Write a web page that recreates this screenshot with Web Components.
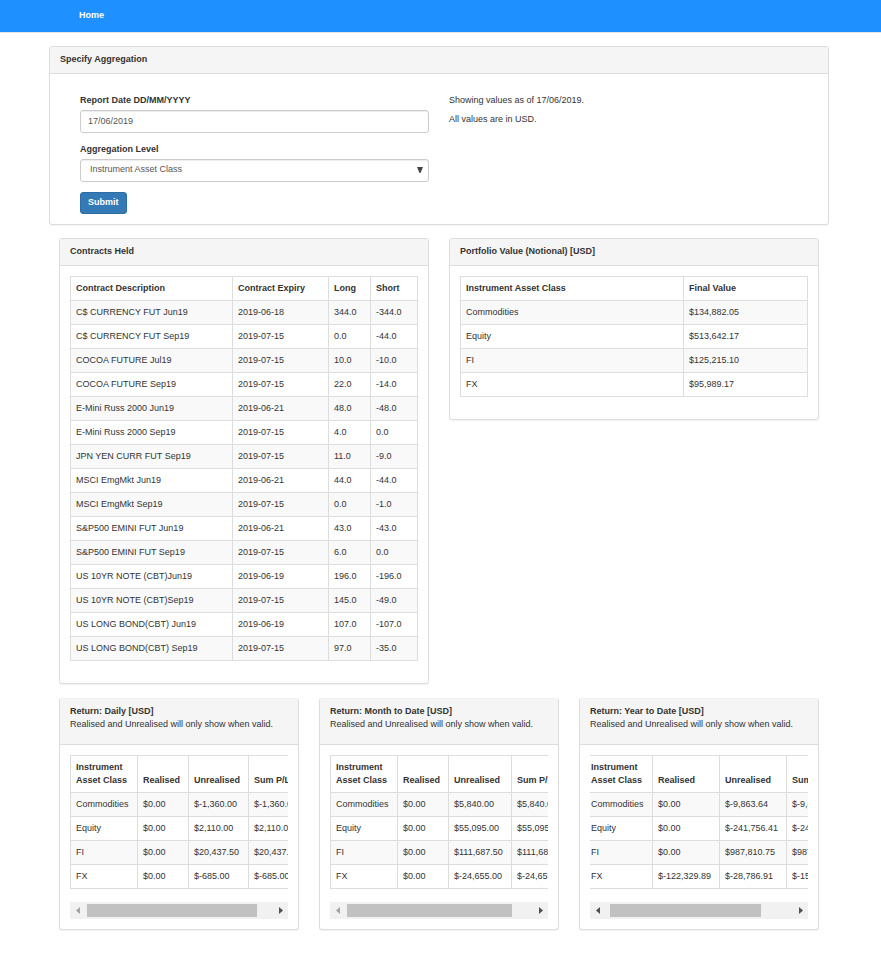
<!DOCTYPE html>
<html lang="en">
<head>
<meta charset="utf-8">
<meta name="viewport" content="width=device-width, initial-scale=1">
<title>Home</title>
<style>
  body { margin: 0; background: #fff; color: #333; font: 9px/13px "Liberation Sans", Arial, sans-serif; }
</style>
</head>
<body>
<report-page></report-page>

<script>
const base = `*, *::before, *::after { box-sizing: border-box; }`;

function define(name, markup, setup) {
  const template = document.createElement('template');
  template.innerHTML = markup;
  customElements.define(name, class extends HTMLElement {
    connectedCallback() {
      if (this.shadowRoot) return;
      this.attachShadow({ mode: 'open' }).append(template.content.cloneNode(true));
      if (setup) setup(this, this.shadowRoot);
    }
  });
}

const datasets = {
  contracts: {
    widths: [0, 96, 42, 47],
    head: ['Contract Description', 'Contract Expiry', 'Long', 'Short'],
    rows: [
      ['C$ CURRENCY FUT Jun19', '2019-06-18', '344.0', '-344.0'],
      ['C$ CURRENCY FUT Sep19', '2019-07-15', '0.0', '-44.0'],
      ['COCOA FUTURE Jul19', '2019-07-15', '10.0', '-10.0'],
      ['COCOA FUTURE Sep19', '2019-07-15', '22.0', '-14.0'],
      ['E-Mini Russ 2000 Jun19', '2019-06-21', '48.0', '-48.0'],
      ['E-Mini Russ 2000 Sep19', '2019-07-15', '4.0', '0.0'],
      ['JPN YEN CURR FUT Sep19', '2019-07-15', '11.0', '-9.0'],
      ['MSCI EmgMkt Jun19', '2019-06-21', '44.0', '-44.0'],
      ['MSCI EmgMkt Sep19', '2019-07-15', '0.0', '-1.0'],
      ['S&P500 EMINI FUT Jun19', '2019-06-21', '43.0', '-43.0'],
      ['S&P500 EMINI FUT Sep19', '2019-07-15', '6.0', '0.0'],
      ['US 10YR NOTE (CBT)Jun19', '2019-06-19', '196.0', '-196.0'],
      ['US 10YR NOTE (CBT)Sep19', '2019-07-15', '145.0', '-49.0'],
      ['US LONG BOND(CBT) Jun19', '2019-06-19', '107.0', '-107.0'],
      ['US LONG BOND(CBT) Sep19', '2019-07-15', '97.0', '-35.0']
    ]
  },
  portfolio: {
    widths: [0, 124],
    head: ['Instrument Asset Class', 'Final Value'],
    rows: [['Commodities', '$134,882.05'], ['Equity', '$513,642.17'], ['FI', '$125,215.10'], ['FX', '$95,989.17']]
  },
  daily: {
    widths: [67, 51, 60, 58],
    head: ['Instrument Asset Class', 'Realised', 'Unrealised', 'Sum P/L'],
    rows: [
      ['Commodities', '$0.00', '$-1,360.00', '$-1,360.00'],
      ['Equity', '$0.00', '$2,110.00', '$2,110.00'],
      ['FI', '$0.00', '$20,437.50', '$20,437.50'],
      ['FX', '$0.00', '$-685.00', '$-685.00']
    ]
  },
  month: {
    widths: [67, 51, 63, 62],
    head: ['Instrument Asset Class', 'Realised', 'Unrealised', 'Sum P/L'],
    rows: [
      ['Commodities', '$0.00', '$5,840.00', '$5,840.00'],
      ['Equity', '$0.00', '$55,095.00', '$55,095.00'],
      ['FI', '$0.00', '$111,687.50', '$111,687.50'],
      ['FX', '$0.00', '$-24,655.00', '$-24,655.00']
    ]
  },
  year: {
    widths: [67, 67, 67, 65],
    head: ['Instrument Asset Class', 'Realised', 'Unrealised', 'Sum P/L'],
    rows: [
      ['Commodities', '$0.00', '$-9,863.64', '$-9,863.64'],
      ['Equity', '$0.00', '$-241,756.41', '$-241,756.41'],
      ['FI', '$0.00', '$987,810.75', '$987,810.75'],
      ['FX', '$-122,329.89', '$-28,786.91', '$-151,116.80']
    ]
  }
};

define('nav-bar', `
  <style>${base}
    :host { display: block; background: #1e90ff; border-bottom: 1px solid #e7e7e7; }
    nav { padding: 9px 79px 10px; }
    a { color: #fff; font-weight: bold; text-decoration: none; }
  </style>
  <nav><a href="#">Home</a></nav>`);

define('info-panel', `
  <style>${base}
    :host { display: block; background: #fff; border: 1px solid #ddd; border-radius: 3px; box-shadow: 0 1px 1px rgba(0,0,0,.05); min-width: 0; }
    header { padding: 6px 10px 7px; background: #f5f5f5; border-bottom: 1px solid #ddd; border-radius: 2px 2px 0 0; }
    :host([noted]) { border-top-color: #f0f0f0; }
    :host([noted]) header { padding-bottom: 13px; }
    h2 { margin: 0; font: inherit; font-weight: bold; }
    .body { padding: 10px; }
  </style>
  <header><h2><slot name="title"></slot></h2><slot name="note"></slot></header>
  <div class="body"><slot></slot></div>`);

define('aggregation-form', `
  <style>${base}
    :host { display: grid; grid-template-columns: 1fr 1fr; gap: 20px; padding: 10px 20px 0; }
    form { display: grid; gap: 10px; justify-items: start; }
    .field { display: grid; gap: 3px; width: 100%; }
    label { font-weight: bold; }
    input, select { width: 100%; height: 23px; margin: 0; border: 1px solid #ccc; border-radius: 3px; background: #fff;
      color: #555; font: inherit; box-shadow: inset 0 1px 1px rgba(0,0,0,.075); }
    input { padding: 0 7px 2px; }
    .pick { display: grid; align-items: center; }
    .pick > * { grid-area: 1 / 1; }
    select { appearance: none; padding: 0 20px 2px 9px; }
    svg { justify-self: end; margin: 0 6px 2px 0; pointer-events: none; }
    button { height: 22px; padding: 0 7px 2px; border: 1px solid #2e6da4; border-radius: 3px; background: #337ab7;
      color: #fff; font: inherit; font-weight: bold; }
    p { margin: 0 0 6px; }
  </style>
  <form onsubmit="return false">
    <div class="field">
      <label for="date">Report Date DD/MM/YYYY</label>
      <input id="date" type="text" value="17/06/2019">
    </div>
    <div class="field">
      <label for="level">Aggregation Level</label>
      <div class="pick">
        <select id="level"><option>Instrument Asset Class</option></select>
        <svg width="6" height="6" viewBox="0 0 6 6" aria-hidden="true"><path d="M0 0h6L3.500 6h-1z" fill="#444"/></svg>
      </div>
    </div>
    <button type="submit">Submit</button>
  </form>
  <div>
    <p>Showing values as of 17/06/2019.</p>
    <p>All values are in USD.</p>
  </div>`);

define('data-table', `
  <style>${base}
    :host { display: block; }
    table { width: 100%; table-layout: fixed; border-collapse: collapse; }
    th, td { padding: 5px; border: 1px solid #ddd; text-align: left; vertical-align: top; white-space: nowrap; }
    th { vertical-align: bottom; }
    tbody tr:nth-child(odd) { background: #f9f9f9; }
    :host([wide]) th:first-child { white-space: normal; }
  </style>
  <table><colgroup></colgroup><thead><tr></tr></thead><tbody></tbody></table>`,
  (host, root) => {
    const { widths, head, rows } = datasets[host.getAttribute('source')];
    const add = (parent, tag, text = '') => {
      const el = parent.appendChild(document.createElement(tag));
      el.textContent = text;
      return el;
    };
    for (const w of widths) {
      const col = add(root.querySelector('colgroup'), 'col');
      if (w) col.style.width = w + 'px';
    }
    if (host.hasAttribute('wide')) {
      root.querySelector('table').style.minWidth = widths.reduce((a, b) => a + b, 0) + 'px';
    }
    for (const text of head) add(root.querySelector('thead tr'), 'th', text).scope = 'col';
    for (const row of rows) {
      const tr = add(root.querySelector('tbody'), 'tr');
      for (const text of row) add(tr, 'td', text);
    }
  });

define('scroll-area', `
  <style>${base}
    :host { display: block; }
    .view { overflow-x: auto; overflow-y: hidden; scrollbar-width: none; }
    .bar { display: grid; grid-template-columns: 17px 1fr 17px; height: 17px; margin-top: 13px; background: #f1f1f1; }
    button { display: grid; place-items: center; padding: 0 2px 0 0; border: 0; background: none; color: #505050; }
    button:last-child { padding: 0 0 0 2px; }
    button:disabled { color: #a3a3a3; }
    .track { padding: 2px 0; overflow: hidden; }
    .thumb { height: 13px; background: #c1c1c1; }
  </style>
  <div class="view"><slot></slot></div>
  <div class="bar">
    <button type="button" aria-label="Scroll left"><svg width="4" height="7" viewBox="0 0 4 7"><path d="M4 0v7L0 3.500z" fill="currentColor"/></svg></button>
    <div class="track"><div class="thumb"></div></div>
    <button type="button" aria-label="Scroll right"><svg width="4" height="7" viewBox="0 0 4 7"><path d="M0 0v7l4-3.500z" fill="currentColor"/></svg></button>
  </div>`,
  (host, root) => {
    const view = root.querySelector('.view');
    const track = root.querySelector('.track');
    const thumb = root.querySelector('.thumb');
    const [left, right] = root.querySelectorAll('button');
    const update = () => {
      const scale = track.clientWidth / view.scrollWidth;
      thumb.style.width = Math.ceil(view.clientWidth * scale) + 'px';
      thumb.style.marginLeft = Math.round(view.scrollLeft * scale) + 'px';
      left.disabled = view.scrollLeft <= 0;
      right.disabled = view.scrollLeft + view.clientWidth >= view.scrollWidth;
    };
    left.onclick = () => { view.scrollLeft -= 40; };
    right.onclick = () => { view.scrollLeft += 40; };
    view.addEventListener('scroll', update);
    new ResizeObserver(update).observe(view);
    requestAnimationFrame(() => {
      view.scrollLeft = Number(host.getAttribute('start') || 0);
      update();
    });
  });

define('report-page', `
  <style>${base}
    :host { display: block; }
    main { display: grid; gap: 13px; padding: 13px 52px 28px 49px; }
    .row { display: grid; gap: 20px; padding: 0 10px; align-items: start; }
    .two { grid-template-columns: repeat(2, minmax(0, 1fr)); }
    .three { grid-template-columns: repeat(3, minmax(0, 1fr)); padding-top: 1px; }
    .two data-table { padding-bottom: 12px; }
  </style>
  <nav-bar></nav-bar>
  <main>
    <info-panel><span slot="title">Specify Aggregation</span><aggregation-form></aggregation-form></info-panel>
    <div class="row two">
      <info-panel><span slot="title">Contracts Held</span><data-table source="contracts"></data-table></info-panel>
      <info-panel><span slot="title">Portfolio Value (Notional) [USD]</span><data-table source="portfolio"></data-table></info-panel>
    </div>
    <div class="row three">
      <info-panel noted><span slot="title">Return: Daily [USD]</span><span slot="note">Realised and Unrealised will only show when valid.</span>
        <scroll-area><data-table wide source="daily"></data-table></scroll-area></info-panel>
      <info-panel noted><span slot="title">Return: Month to Date [USD]</span><span slot="note">Realised and Unrealised will only show when valid.</span>
        <scroll-area><data-table wide source="month"></data-table></scroll-area></info-panel>
      <info-panel noted><span slot="title">Return: Year to Date [USD]</span><span slot="note">Realised and Unrealised will only show when valid.</span>
        <scroll-area start="5"><data-table wide source="year"></data-table></scroll-area></info-panel>
    </div>
  </main>`);
</script>
</body>
</html>
